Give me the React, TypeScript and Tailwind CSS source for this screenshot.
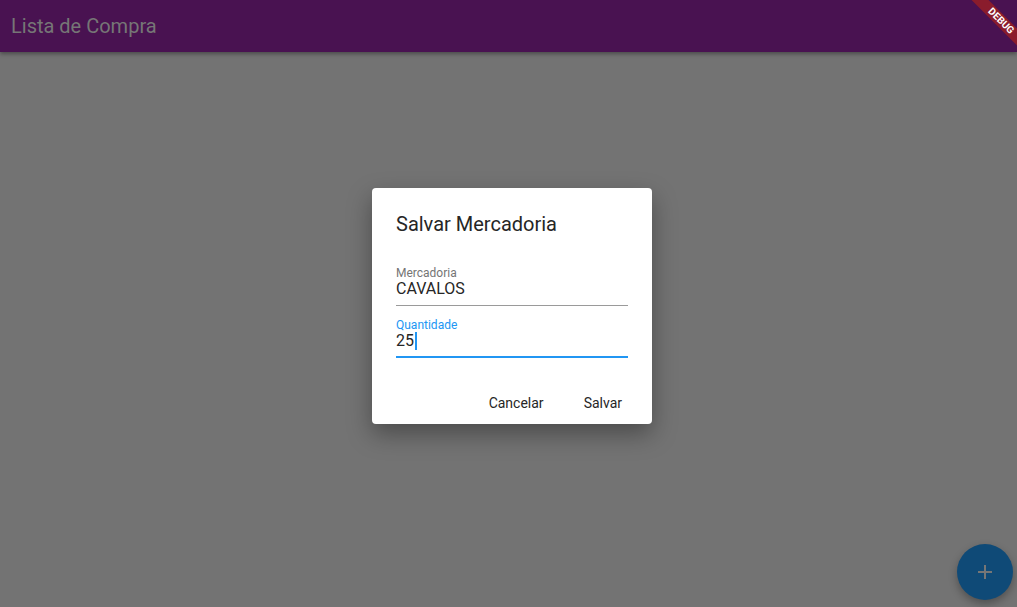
export default function App() {
  return (
    <div className="relative h-[607px] w-[1017px] overflow-hidden bg-[#737373] font-['Roboto',sans-serif]">
      {/* App bar */}
      <header className="flex h-[52px] items-center bg-[#491251] px-[11px] shadow-[0_2px_4px_rgba(0,0,0,0.35)]">
        <h1 className="text-[20px] font-normal leading-none text-[#767676]">Lista de Compra</h1>
      </header>

      {/* Debug banner */}
      <div className="absolute right-0 top-0 h-[70px] w-[70px] overflow-hidden">
        <div className="absolute right-[-44px] top-[15px] h-[12px] w-[120px] rotate-45 bg-[#8a1c2c] text-center text-[10px] font-bold leading-[12px] text-white">
          DEBUG
        </div>
      </div>

      {/* Dialog */}
      <div className="absolute left-[372px] top-[188px] h-[236px] w-[280px] rounded-[4px] bg-white shadow-[0_10px_24px_rgba(0,0,0,0.35)]">
        <div className="flex flex-col px-6 pt-[24px]">
          <h2 className="text-[20px] leading-[24px] text-[#262626]">Salvar Mercadoria</h2>

          <div className="mt-[30px] flex flex-col border-b border-[#9a9a9a] pb-[7px]">
            <span className="text-[12px] leading-[14px] text-[#757575]">Mercadoria</span>
            <span className="text-[16px] leading-[18px] text-[#262626]">CAVALOS</span>
          </div>

          <div className="mt-[12px] flex flex-col border-b-2 border-[#2196f3] pb-[6px]">
            <span className="text-[12px] leading-[14px] text-[#2196f3]">Quantidade</span>
            <span className="flex items-center text-[16px] leading-[18px] text-[#262626]">
              25<span className="ml-[1px] inline-block h-[18px] w-[2px] bg-[#2196f3]" />
            </span>
          </div>
        </div>

        <div className="absolute bottom-[11px] right-[22px] flex gap-[24px]">
          <button className="px-[8px] text-[14px] leading-[20px] text-[#262626]">Cancelar</button>
          <button className="px-[8px] text-[14px] leading-[20px] text-[#262626]">Salvar</button>
        </div>
      </div>

      {/* FAB */}
      <button className="absolute left-[957px] top-[544px] flex h-[56px] w-[56px] items-center justify-center rounded-full bg-[#0f4a77] shadow-[0_4px_8px_rgba(0,0,0,0.3)]">
        <svg width="24" height="24" viewBox="0 0 24 24">
          <path d="M19 13h-6v6h-2v-6H5v-2h6V5h2v6h6v2z" fill="#767676" />
        </svg>
      </button>
    </div>
  );
}
